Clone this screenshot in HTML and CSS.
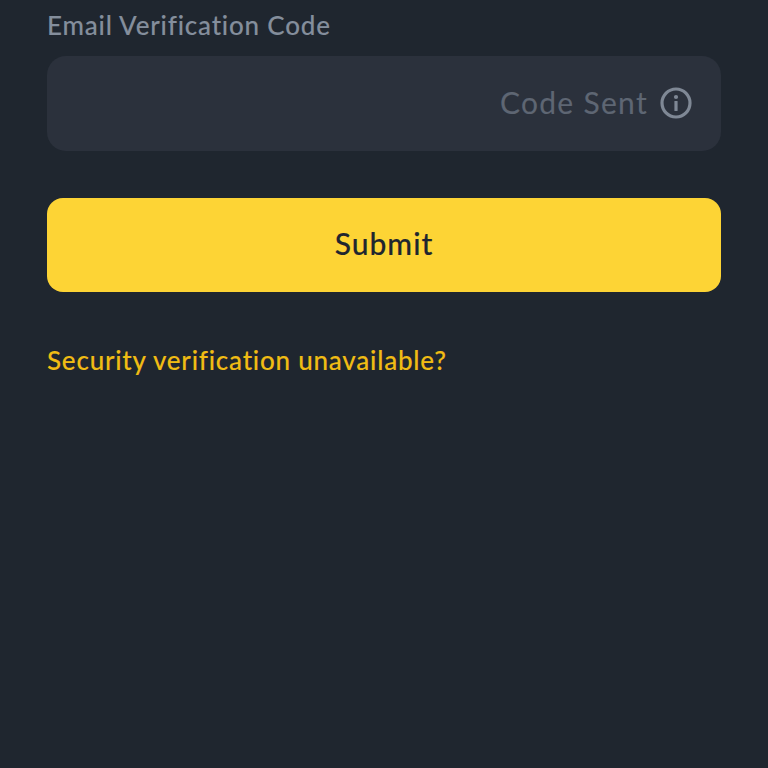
FILE: index.html
```html
<!DOCTYPE html>
<html lang="en">
<head>
<meta charset="utf-8">
<title>Email Verification</title>
<link rel="stylesheet" href="styles.css">
</head>
<body>
<main class="form">
  <label class="label" for="code">Email Verification Code</label>
  <div class="field">
    <input class="input" id="code" type="text" aria-label="Email Verification Code">
    <span class="sent">Code Sent</span>
    <svg class="info" viewBox="0 0 32 32" aria-hidden="true">
      <circle cx="16" cy="16" r="14" fill="none" stroke="currentColor" stroke-width="3.2"/>
      <circle cx="16" cy="10" r="2.1" fill="currentColor"/>
      <rect x="14.4" y="14" width="3.2" height="10" rx="0.6" fill="currentColor"/>
    </svg>
  </div>
  <button class="submit" type="button">Submit</button>
  <a class="help" href="#">Security verification unavailable?</a>
</main>
</body>
</html>
```
FILE: styles.css
```css
* { box-sizing: border-box; }
html, body { height: 100%; }
body {
  margin: 0;
  background: #1f262f;
  font-family: "Lato", "Open Sans", sans-serif;
  font-variant-ligatures: none;
  overflow: hidden;
}
.form {
  display: flex;
  flex-direction: column;
  padding: 9px 47px 0;
}
.label {
  height: 33px;
  line-height: 33px;
  font-size: 26px;
  font-weight: 500;
  letter-spacing: 0.8px;
  -webkit-text-stroke: 0.1px currentColor;
  color: #848e9c;
}
.field {
  display: flex;
  align-items: center;
  height: 94.5px;
  margin-top: 14px;
  padding: 0 29px 2px 20px;
  background: #2b313c;
  border-radius: 19px;
}
.input {
  flex: 1;
  min-width: 0;
  border: 0;
  background: transparent;
  outline: 0;
  color: #eaecef;
  font: inherit;
}
.sent {
  font-size: 30px;
  letter-spacing: 1.3px;
  -webkit-text-stroke: 0.15px currentColor;
  color: #5e6673;
}
.info {
  width: 32px;
  height: 32px;
  margin-left: 12px;
  margin-top: 2px;
  color: #7f8895;
}
.submit {
  height: 94px;
  margin-top: 47.5px;
  padding: 0 0 4px;
  border: 0;
  border-radius: 16px;
  background: #fdd435;
  color: #1f262f;
  font: inherit;
  font-size: 30px;
  font-weight: 500;
  letter-spacing: 1px;
  -webkit-text-stroke: 0.15px currentColor;
}
.help {
  margin-top: 49.5px;
  line-height: 36px;
  font-size: 26px;
  font-weight: 500;
  letter-spacing: 0.78px;
  -webkit-text-stroke: 0.1px currentColor;
  color: #f0bc14;
  text-decoration: none;
}
```
